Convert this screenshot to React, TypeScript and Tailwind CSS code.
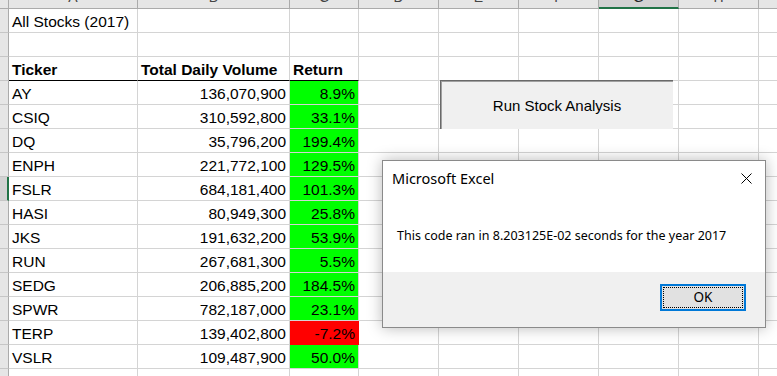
const stocks = [
  ['AY', '136,070,900', '8.9%'],
  ['CSIQ', '310,592,800', '33.1%'],
  ['DQ', '35,796,200', '199.4%'],
  ['ENPH', '221,772,100', '129.5%'],
  ['FSLR', '684,181,400', '101.3%'],
  ['HASI', '80,949,300', '25.8%'],
  ['JKS', '191,632,200', '53.9%'],
  ['RUN', '267,681,300', '5.5%'],
  ['SEDG', '206,885,200', '184.5%'],
  ['SPWR', '782,187,000', '23.1%'],
  ['TERP', '139,402,800', '-7.2%'],
  ['VSLR', '109,487,900', '50.0%'],
]

const letters = ['A', 'B', 'C', 'D', 'E', 'F', 'G', 'H', 'I']

const cell = 'h-6 border-r border-b border-[#D4D4D4] flex items-end pb-[1px] leading-[18px] whitespace-nowrap overflow-hidden'

function RowHead({ selected }: { selected?: boolean }) {
  return selected ? (
    <div className="h-6 bg-[#D2D2D2] border-b border-[#C6C6C6] border-r-2 border-r-[#217346]" />
  ) : (
    <div className="h-6 bg-[#E6E6E6] border-b border-[#C6C6C6] border-r border-r-[#ABABAB]" />
  )
}

function EmptyCells({ n }: { n: number }) {
  return (
    <>
      {Array.from({ length: n }).map((_, i) => (
        <div key={i} className={cell} />
      ))}
    </>
  )
}

export default function App() {
  return (
    <div className="relative w-[777px] h-[376px] overflow-hidden bg-white text-black font-['Liberation_Sans',Arial,sans-serif] text-[15.5px]">
      <div className="grid grid-cols-[9px_129px_152px_69px_80px_80px_80px_80px_80px_40px]">
        <div className="h-[9px] bg-[#E6E6E6] border-r border-b border-[#ABABAB]" />
        {letters.map((l) =>
          l === 'G' ? (
            <div key={l} className="h-[9px] bg-[#D2D2D2] border-r border-[#ABABAB] border-b-2 border-b-[#217346] flex justify-center overflow-hidden">
              <span className="-mt-[10px] text-[14px] leading-[15px] text-[#262626]">{l}</span>
            </div>
          ) : (
            <div key={l} className="h-[9px] bg-[#E6E6E6] border-r border-b border-[#ABABAB] flex justify-center overflow-hidden">
              <span className="-mt-[10px] text-[14px] leading-[15px] text-[#444]">{l}</span>
            </div>
          )
        )}

        {/* row 1 */}
        <RowHead />
        <div className={`${cell} pl-[3px] overflow-visible`}>All Stocks (2017)</div>
        <EmptyCells n={8} />

        {/* row 2 */}
        <RowHead />
        <EmptyCells n={9} />

        {/* row 3 */}
        <RowHead />
        <div className={`${cell} pl-[3px] font-bold border-b-black`}>Ticker</div>
        <div className={`${cell} pl-[3px] font-bold border-b-black`}>Total Daily Volume</div>
        <div className={`${cell} pl-[3px] font-bold border-b-black`}>Return</div>
        <EmptyCells n={6} />

        {stocks.map(([t, vol, ret], i) => {
          const neg = ret.startsWith('-')
          return (
            <div key={t} className="contents">
              <RowHead selected={i === 4} />
              <div className={`${cell} pl-[3px]`}>{t}</div>
              <div className={`${cell} justify-end pr-[3px]`}>{vol}</div>
              <div
                className={`${cell} justify-end pr-[3px] ${
                  neg ? 'bg-[#FF0000] border-[#FF0000]' : 'bg-[#00FF00] border-[#00FF00]'
                }`}
              >
                {ret}
              </div>
              <EmptyCells n={6} />
            </div>
          )
        })}

        {/* row 16 */}
        <RowHead />
        <EmptyCells n={9} />
      </div>

      {/* form button */}
      <div className="absolute left-[440px] top-[80px] w-[233px] h-[49px] bg-[#F0F0F0] border-t border-l border-[#696969] shadow-[inset_1px_1px_0_#A0A0A0] flex items-center justify-center pt-[3px] text-[15px]">
        Run Stock Analysis
      </div>

      {/* message box */}
      <div className="absolute left-[382px] top-[160px] w-[384px] h-[168px] bg-white border border-[#8A8A8A] shadow-[0_0_14px_rgba(0,0,0,0.28)] flex flex-col font-['Noto_Sans',sans-serif]">
        <div className="h-[35px] flex items-center justify-between pl-[9px] pr-[13px]">
          <span className="text-[14.5px] text-black">Microsoft Excel</span>
          <svg width="11" height="11" viewBox="0 0 11 11">
            <path d="M0.5 0.5 L10.5 10.5 M10.5 0.5 L0.5 10.5" stroke="#000" strokeWidth="1" />
          </svg>
        </div>
        <div className="flex-1 flex items-center pl-[14px] pt-[5px] text-[12.5px]">
          This code ran in 8.203125E-02 seconds for the year 2017
        </div>
        <div className="h-[55px] bg-[#F0F0F0] flex justify-end pt-[12px] pr-[19px]">
          <div className="relative w-[86px] h-[27px] border-2 border-[#0078D7] bg-[#E1E1E1] flex items-center justify-center text-[13.5px]">
            <span className="absolute inset-[1px] border border-dotted border-black" />
            OK
          </div>
        </div>
      </div>
    </div>
  )
}
